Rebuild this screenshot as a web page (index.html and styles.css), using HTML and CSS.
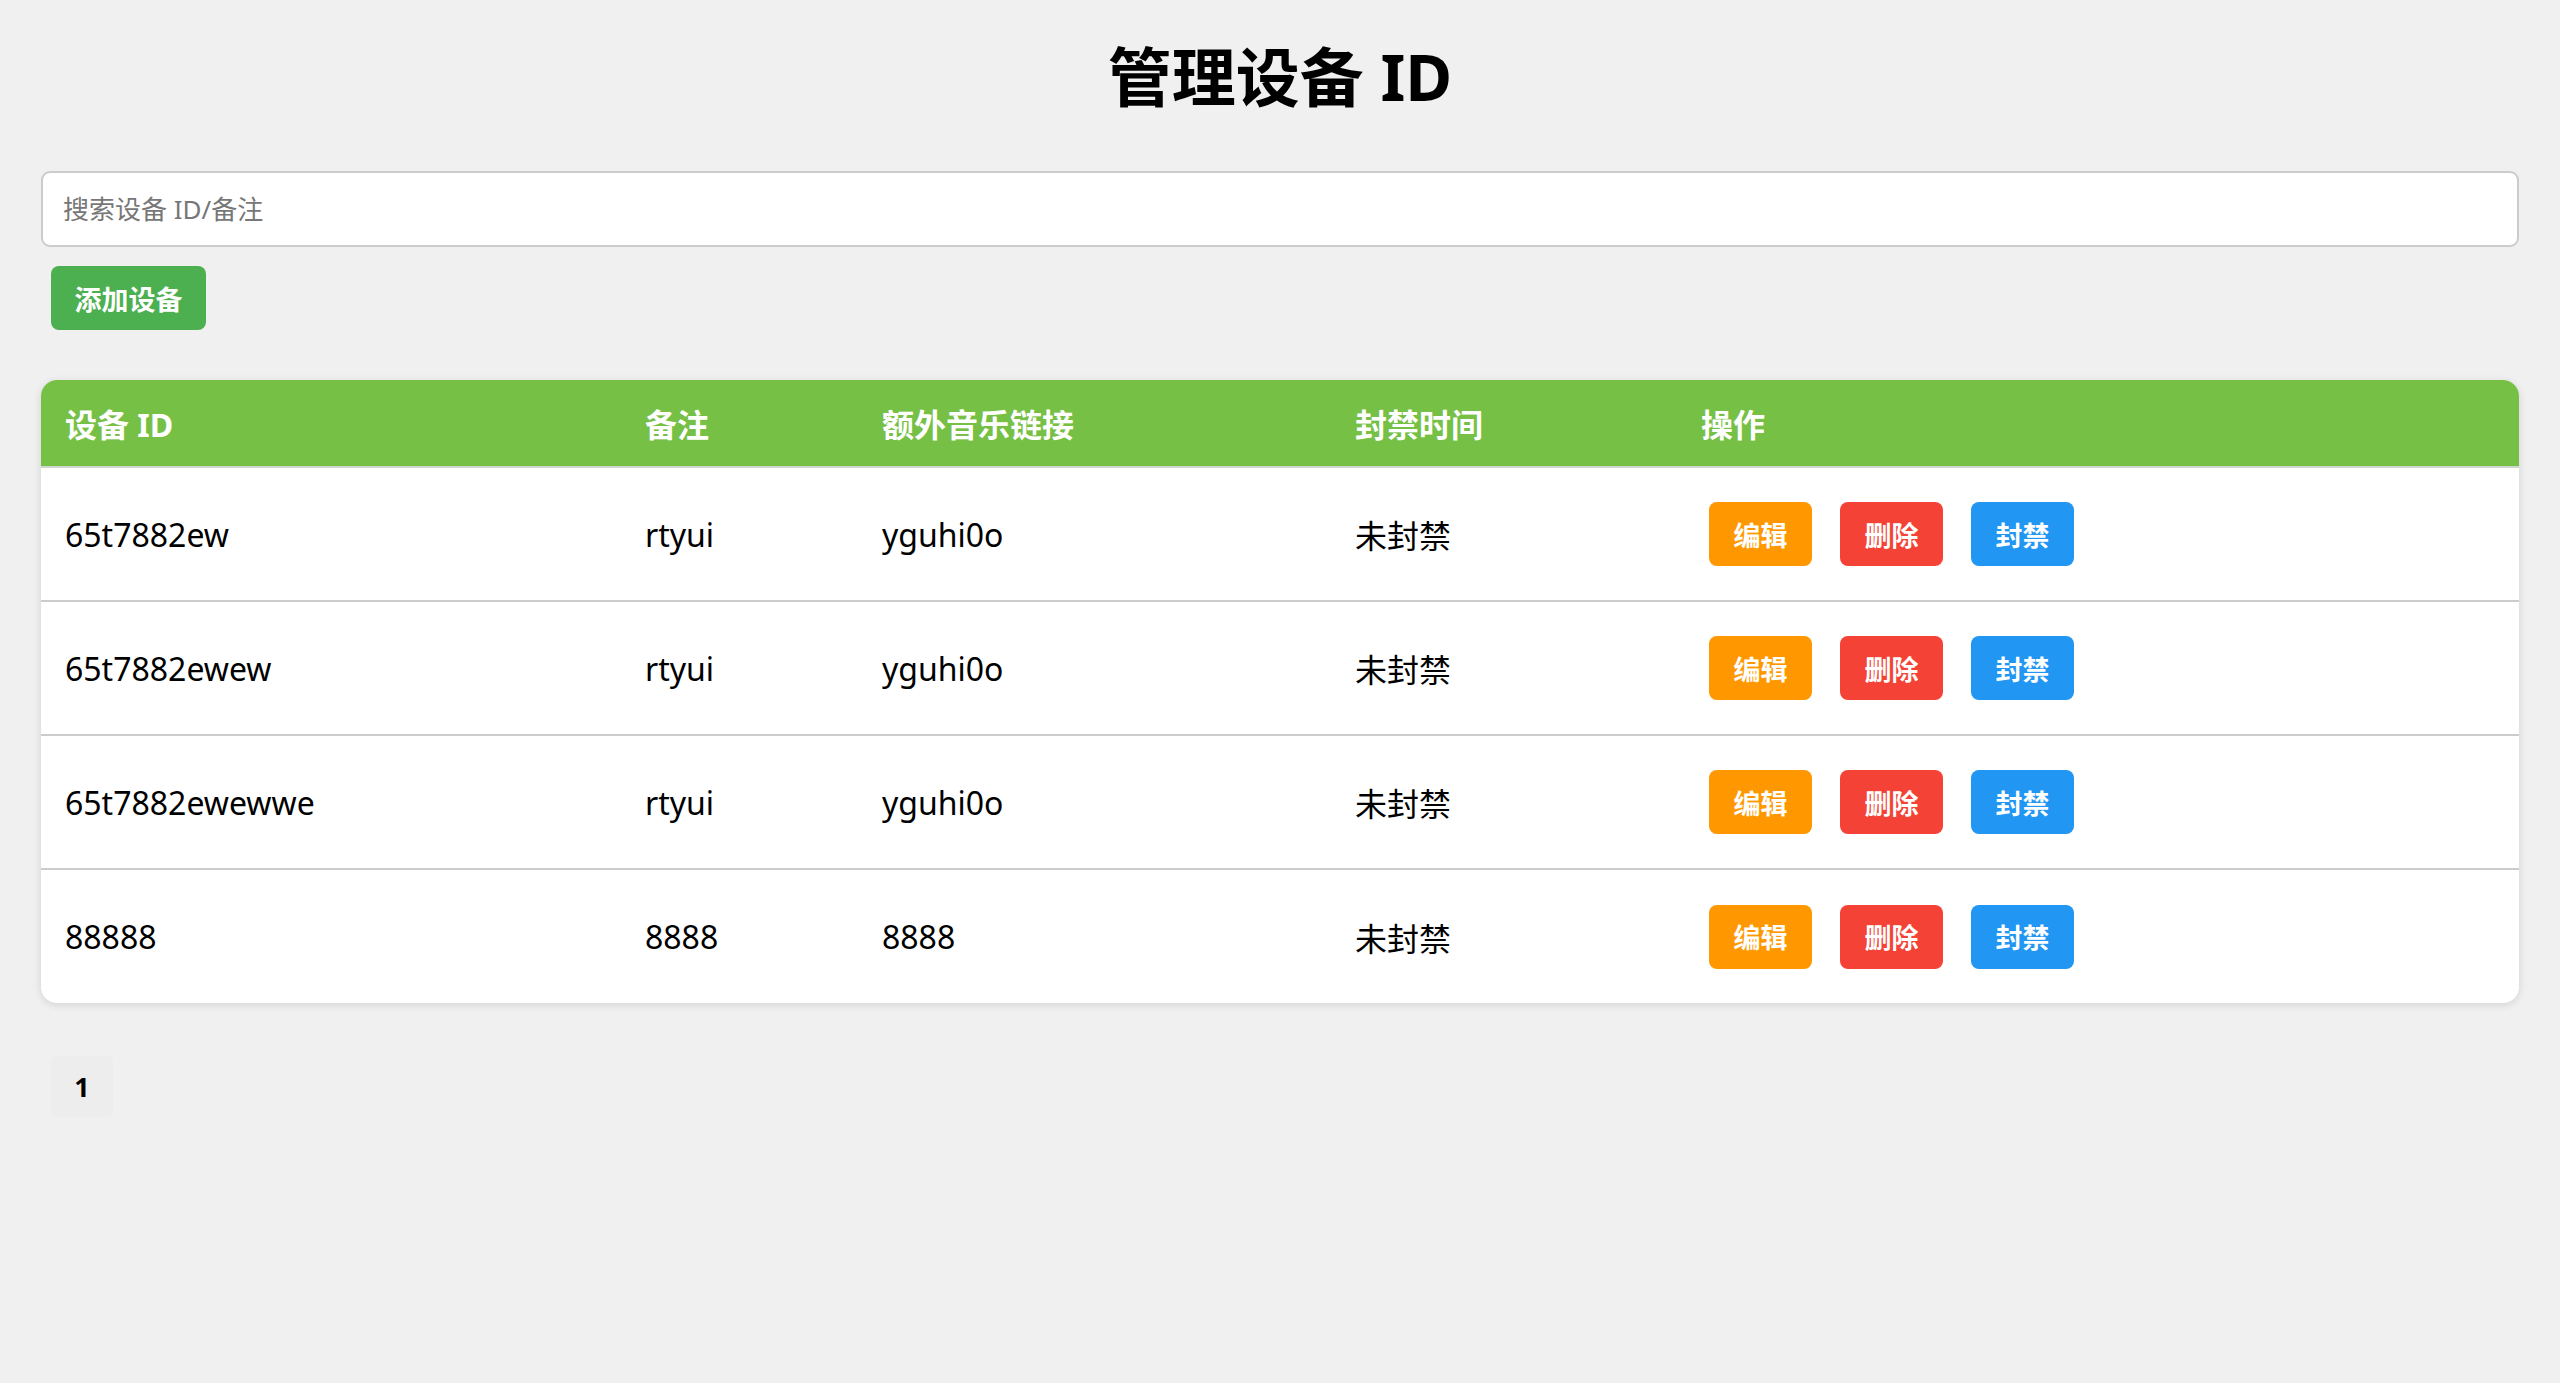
FILE: index.html
```html
<!DOCTYPE html>
<html lang="zh-CN">
<head>
<meta charset="utf-8">
<title>管理设备 ID</title>
<link rel="stylesheet" href="styles.css">
</head>
<body>
<div class="page">
  <h1 class="title">管理设备 ID</h1>
  <input class="search" type="text" placeholder="搜索设备 ID/备注">
  <div class="toolbar"><button class="btn-add">添加设备</button></div>
  <div class="table-card">
    <table class="devices">
      <colgroup>
        <col class="c1"><col class="c2"><col class="c3"><col class="c4"><col class="c5">
      </colgroup>
      <thead>
        <tr><th>设备 ID</th><th>备注</th><th>额外音乐链接</th><th>封禁时间</th><th>操作</th></tr>
      </thead>
      <tbody>
        <tr><td>65t7882ew</td><td>rtyui</td><td>yguhi0o</td><td>未封禁</td><td><div class="ops"><button class="op edit">编辑</button><button class="op del">删除</button><button class="op ban">封禁</button></div></td></tr>
        <tr><td>65t7882ewew</td><td>rtyui</td><td>yguhi0o</td><td>未封禁</td><td><div class="ops"><button class="op edit">编辑</button><button class="op del">删除</button><button class="op ban">封禁</button></div></td></tr>
        <tr><td>65t7882ewewwe</td><td>rtyui</td><td>yguhi0o</td><td>未封禁</td><td><div class="ops"><button class="op edit">编辑</button><button class="op del">删除</button><button class="op ban">封禁</button></div></td></tr>
        <tr><td>88888</td><td>8888</td><td>8888</td><td>未封禁</td><td><div class="ops"><button class="op edit">编辑</button><button class="op del">删除</button><button class="op ban">封禁</button></div></td></tr>
      </tbody>
    </table>
  </div>
  <div class="pager"><span class="page-num">1</span></div>
</div>
</body>
</html>
```

FILE: styles.css
```css
* { box-sizing: border-box; }
html, body { margin: 0; padding: 0; }
body {
  background: #f0f0f0;
  font-family: "Noto Sans", "Noto Sans CJK SC", sans-serif;
  color: #000;
}
.page {
  padding: 29px 41px 0 41px;
}
.title {
  margin: 0;
  font-size: 64px;
  line-height: 96px;
  height: 96px;
  font-weight: 700;
  text-align: center;
}
.search {
  display: block;
  width: 100%;
  height: 76px;
  margin-top: 46px;
  padding: 0 20px;
  border: 2px solid #cccccc;
  border-radius: 9px;
  background: #fff;
  font-family: "Noto Sans", "Noto Sans CJK SC", sans-serif;
  font-size: 26px;
  color: #333;
  outline: none;
}
.search::placeholder { color: #777; }
.toolbar {
  margin-top: 19px;
  padding-left: 10px;
  display: flex;
}
.btn-add {
  height: 64px;
  width: 155px;
  padding: 0;
  border: none;
  border-radius: 8px;
  background: #4caf50;
  color: #fff;
  font-family: "Noto Sans", "Noto Sans CJK SC", sans-serif;
  font-size: 27px;
  font-weight: 700;
}
.table-card {
  margin-top: 50px;
  background: #fff;
  border-radius: 16px;
  overflow: hidden;
  box-shadow: 0 2px 8px rgba(0,0,0,0.12);
}
.devices {
  width: 100%;
  border-collapse: collapse;
  table-layout: fixed;
}
.c1 { width: 580px; }
.c2 { width: 237px; }
.c3 { width: 473px; }
.c4 { width: 346px; }
.devices th {
  height: 87px;
  padding: 0 24px;
  background: #77c046;
  color: #fff;
  font-size: 32px;
  font-weight: 700;
  text-align: left;
  border-bottom: 2px solid #cfd6cc;
}
.devices td {
  height: 134px;
  padding: 0 24px;
  font-size: 32px;
  text-align: left;
  vertical-align: middle;
  border-bottom: 2px solid #cccccc;
}
.devices tbody tr:last-child td { border-bottom: none; }
.ops {
  display: flex;
  gap: 28px;
  padding-left: 8px;
}
.op {
  height: 64px;
  width: 103px;
  padding: 0;
  border: none;
  border-radius: 8px;
  color: #fff;
  font-family: "Noto Sans", "Noto Sans CJK SC", sans-serif;
  font-size: 27px;
  font-weight: 700;
}
.edit { background: #ff9800; }
.del { background: #f44336; }
.ban { background: #2196f3; }
.pager {
  margin-top: 53px;
  padding-left: 10px;
  display: flex;
}
.page-num {
  width: 62px;
  height: 61px;
  display: flex;
  align-items: center;
  justify-content: center;
  background: #ededed;
  border-radius: 6px;
  font-size: 27px;
  font-weight: 700;
}
```
